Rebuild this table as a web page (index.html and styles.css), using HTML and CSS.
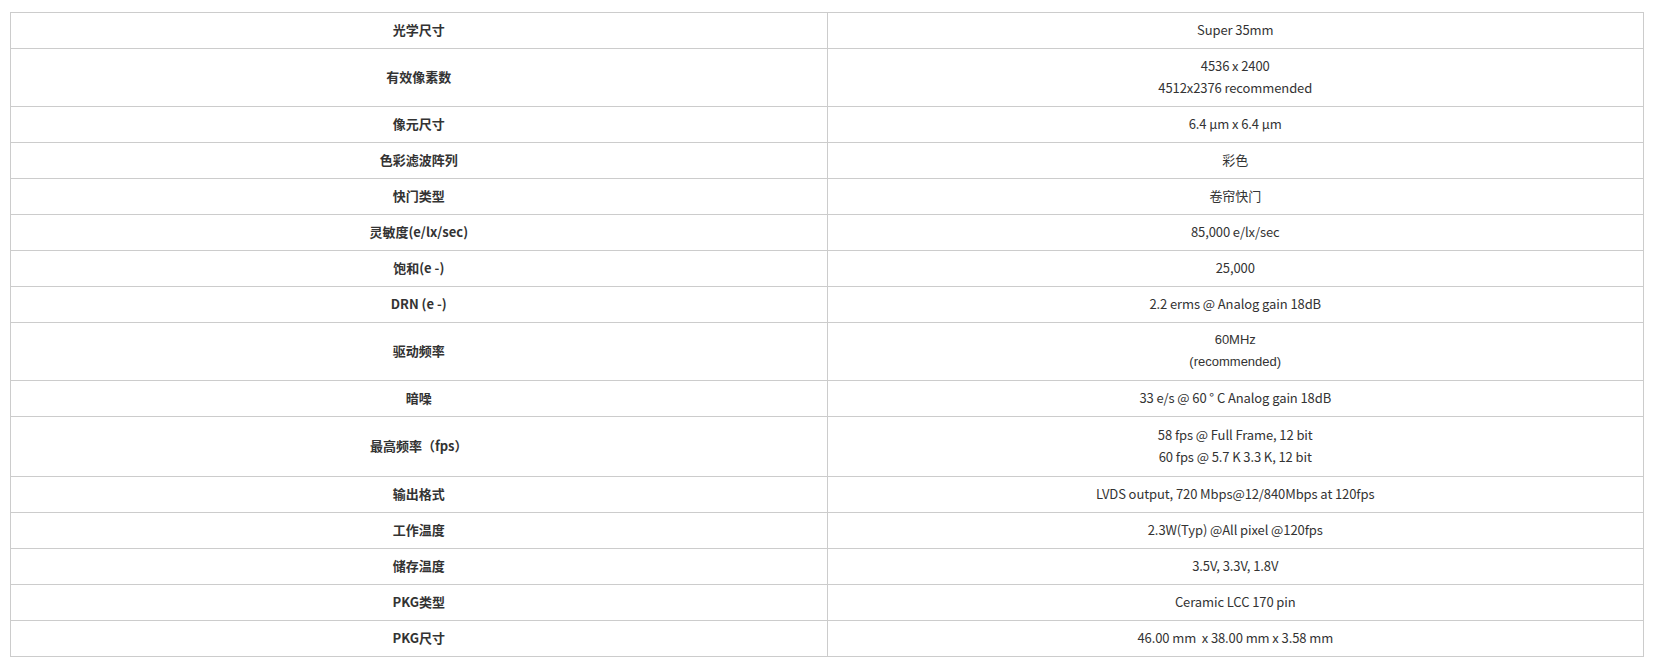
FILE: index.html
```html
<!DOCTYPE html>
<html lang="zh-CN">
<head>
    <meta charset="UTF-8">
    <meta name="viewport" content="width=device-width, initial-scale=1.0">
    <title>规格参数</title>
    <link rel="stylesheet" href="styles.css">
</head>
<body>
    <div class="container">
        <table class="spec-table">
            <tr><th>光学尺寸</th><td>Super 35mm</td></tr>
            <tr><th>有效像素数</th><td>4536 x 2400<br>4512x2376 recommended</td></tr>
            <tr><th>像元尺寸</th><td>6.4 µm x 6.4 µm</td></tr>
            <tr><th>色彩滤波阵列</th><td>彩色</td></tr>
            <tr><th>快门类型</th><td>卷帘快门</td></tr>
            <tr><th>灵敏度(e/lx/sec)</th><td>85,000 e/lx/sec</td></tr>
            <tr><th>饱和(e -)</th><td>25,000</td></tr>
            <tr><th>DRN (e -)</th><td>2.2 erms @ Analog gain 18dB</td></tr>
            <tr><th>驱动频率</th><td class="arial">60MHz<br>(recommended)</td></tr>
            <tr><th>暗噪</th><td>33 e/s @ 60 ° C Analog gain 18dB</td></tr>
            <tr class="tall"><th>最高频率（fps）</th><td>58 fps @ Full Frame, 12 bit<br>60 fps @ 5.7 K 3.3 K, 12 bit</td></tr>
            <tr><th>输出格式</th><td>LVDS output, 720 Mbps@12/840Mbps at 120fps</td></tr>
            <tr><th>工作温度</th><td>2.3W(Typ) @All pixel @120fps</td></tr>
            <tr><th>储存温度</th><td>3.5V, 3.3V, 1.8V</td></tr>
            <tr><th>PKG类型</th><td>Ceramic LCC 170 pin</td></tr>
            <tr><th>PKG尺寸</th><td>46.00 mm&nbsp; x 38.00 mm x 3.58 mm</td></tr>
        </table>
    </div>
</body>
</html>
```

FILE: styles.css
```css
body {
    margin: 0;
    background: #fff;
    font-family: "Noto Sans CJK SC", "Noto Sans", sans-serif;
    color: #333;
}
.container {
    padding: 12px 15px 0 10px;
}
.spec-table {
    width: 100%;
    border-collapse: collapse;
    table-layout: fixed;
    font-size: 13px;
    line-height: 22px;
}
.spec-table th,
.spec-table td {
    border: 1px solid #ccc;
    padding: 6px 10px 7px;
    text-align: center;
    vertical-align: middle;
}
.spec-table th {
    font-weight: bold;
    color: #333;
}
.spec-table td {
    font-weight: normal;
    letter-spacing: -0.1px;
}
.spec-table td.arial {
    font-family: "Liberation Sans", Arial, sans-serif;
    letter-spacing: 0;
}
.spec-table tr.tall td {
    padding: 7px 10px 8px;
}
```
